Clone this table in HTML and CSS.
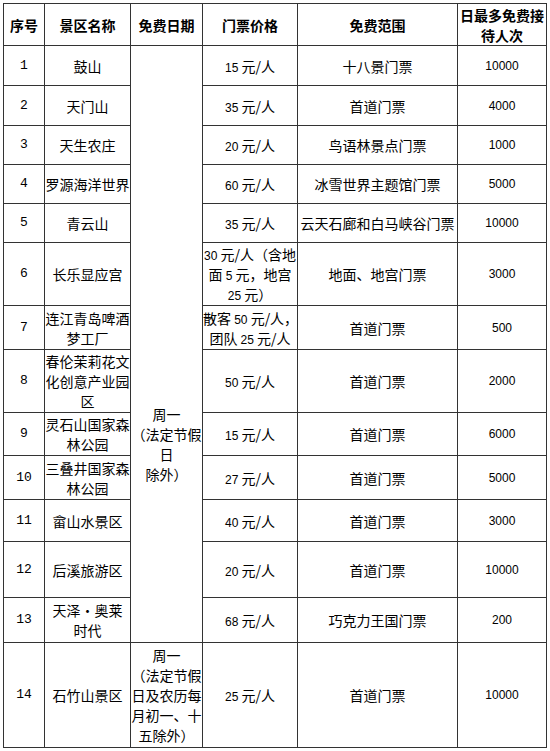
FILE: index.html
```html
<!DOCTYPE html>
<html lang="zh-CN">
<head>
<meta charset="utf-8">
<title>景区免费开放</title>
<link rel="stylesheet" href="styles.css">
</head>
<body>
<table class="t">
  <colgroup>
    <col class="c1"><col class="c2"><col class="c3"><col class="c4"><col class="c5"><col class="c6">
  </colgroup>
  <tr class="r42 hdr">
    <th>序号</th><th>景区名称</th><th>免费日期</th><th>门票价格</th><th>免费范围</th><th>日最多免费接<br>待人次</th>
  </tr>
  <tr class="r40">
    <td class="no">1</td><td>鼓山</td>
    <td rowspan="13" class="free"><div class="free-text">周一<br>（法定节假<br>日<br>除外）</div></td>
    <td><span class="d">15</span> 元/人</td><td>十八景门票</td><td class="cnt">10000</td>
  </tr>
  <tr class="r40">
    <td class="no">2</td><td>天门山</td>
    <td><span class="d">35</span> 元/人</td><td>首道门票</td><td class="cnt">4000</td>
  </tr>
  <tr class="r39">
    <td class="no">3</td><td>天生农庄</td>
    <td><span class="d">20</span> 元/人</td><td>鸟语林景点门票</td><td class="cnt">1000</td>
  </tr>
  <tr class="r39">
    <td class="no">4</td><td>罗源海洋世界</td>
    <td><span class="d">60</span> 元/人</td><td>冰雪世界主题馆门票</td><td class="cnt">5000</td>
  </tr>
  <tr class="r39">
    <td class="no">5</td><td>青云山</td>
    <td><span class="d">35</span> 元/人</td><td>云天石廊和白马峡谷门票</td><td class="cnt">10000</td>
  </tr>
  <tr class="r63">
    <td class="no">6</td><td>长乐显应宫</td>
    <td><span class="d">30</span> 元/人（含地<br>面 <span class="d">5</span> 元，地宫<br><span class="d">25</span> 元）</td><td>地面、地宫门票</td><td class="cnt">3000</td>
  </tr>
  <tr class="r44">
    <td class="no">7</td><td>连江青岛啤酒<br>梦工厂</td>
    <td>散客 <span class="d">50</span> 元/人，<br>团队 <span class="d">25</span> 元/人</td><td>首道门票</td><td class="cnt">500</td>
  </tr>
  <tr class="r63">
    <td class="no">8</td><td>春伦茉莉花文<br>化创意产业园<br>区</td>
    <td><span class="d">50</span> 元/人</td><td>首道门票</td><td class="cnt">2000</td>
  </tr>
  <tr class="r43">
    <td class="no">9</td><td>灵石山国家森<br>林公园</td>
    <td><span class="d">15</span> 元/人</td><td>首道门票</td><td class="cnt">6000</td>
  </tr>
  <tr class="r44">
    <td class="no">10</td><td>三叠井国家森<br>林公园</td>
    <td><span class="d">27</span> 元/人</td><td>首道门票</td><td class="cnt">5000</td>
  </tr>
  <tr class="r42">
    <td class="no">11</td><td>畲山水景区</td>
    <td><span class="d">40</span> 元/人</td><td>首道门票</td><td class="cnt">3000</td>
  </tr>
  <tr class="r56">
    <td class="no">12</td><td>后溪旅游区</td>
    <td><span class="d">20</span> 元/人</td><td>首道门票</td><td class="cnt">10000</td>
  </tr>
  <tr class="r45">
    <td class="no">13</td><td>天泽·奥莱<br>时代</td>
    <td><span class="d">68</span> 元/人</td><td>巧克力王国门票</td><td class="cnt">200</td>
  </tr>
  <tr class="r105">
    <td class="no">14</td><td>石竹山景区</td>
    <td>周一<br>（法定节假<br>日及农历每<br>月初一、十<br>五除外）</td>
    <td><span class="d">25</span> 元/人</td><td>首道门票</td><td class="cnt">10000</td>
  </tr>
</table>
</body>
</html>
```

FILE: styles.css
```css
html, body {
  margin: 0;
  padding: 0;
  background: #ffffff;
}
body {
  padding: 3px 0 0 3px;
  font-family: "Noto Sans CJK SC", "Liberation Sans", sans-serif;
  font-size: 14px;
  line-height: 20px;
  color: #000000;
}
.t {
  border-collapse: collapse;
  table-layout: fixed;
  width: 543px;
}
.c1 { width: 41px; }
.c2 { width: 86px; }
.c3 { width: 72px; }
.c4 { width: 95px; }
.c5 { width: 160px; }
.c6 { width: 89px; }
.t th, .t td {
  border: 1px solid #333333;
  padding: 0;
  text-align: center;
  vertical-align: middle;
  white-space: nowrap;
  overflow: hidden;
}
.hdr th {
  font-weight: bold;
}
.r42 { height: 42px; }
.r40 { height: 40px; }
.r39 { height: 39px; }
.r63 { height: 63px; }
.r44 { height: 44px; }
.r43 { height: 43px; }
.r56 { height: 56px; }
.r45 { height: 45px; }
.r105 { height: 105px; }
.no {
  font-family: "Liberation Mono", monospace;
  font-size: 13px;
}
.cnt {
  font-family: "Liberation Sans", sans-serif;
  font-size: 12px;
}
.d {
  font-family: "Liberation Sans", sans-serif;
  font-size: 12px;
  line-height: 12px;
}
.t td.free {
  vertical-align: top;
}
.free-text {
  margin-top: 358px;
}
```
